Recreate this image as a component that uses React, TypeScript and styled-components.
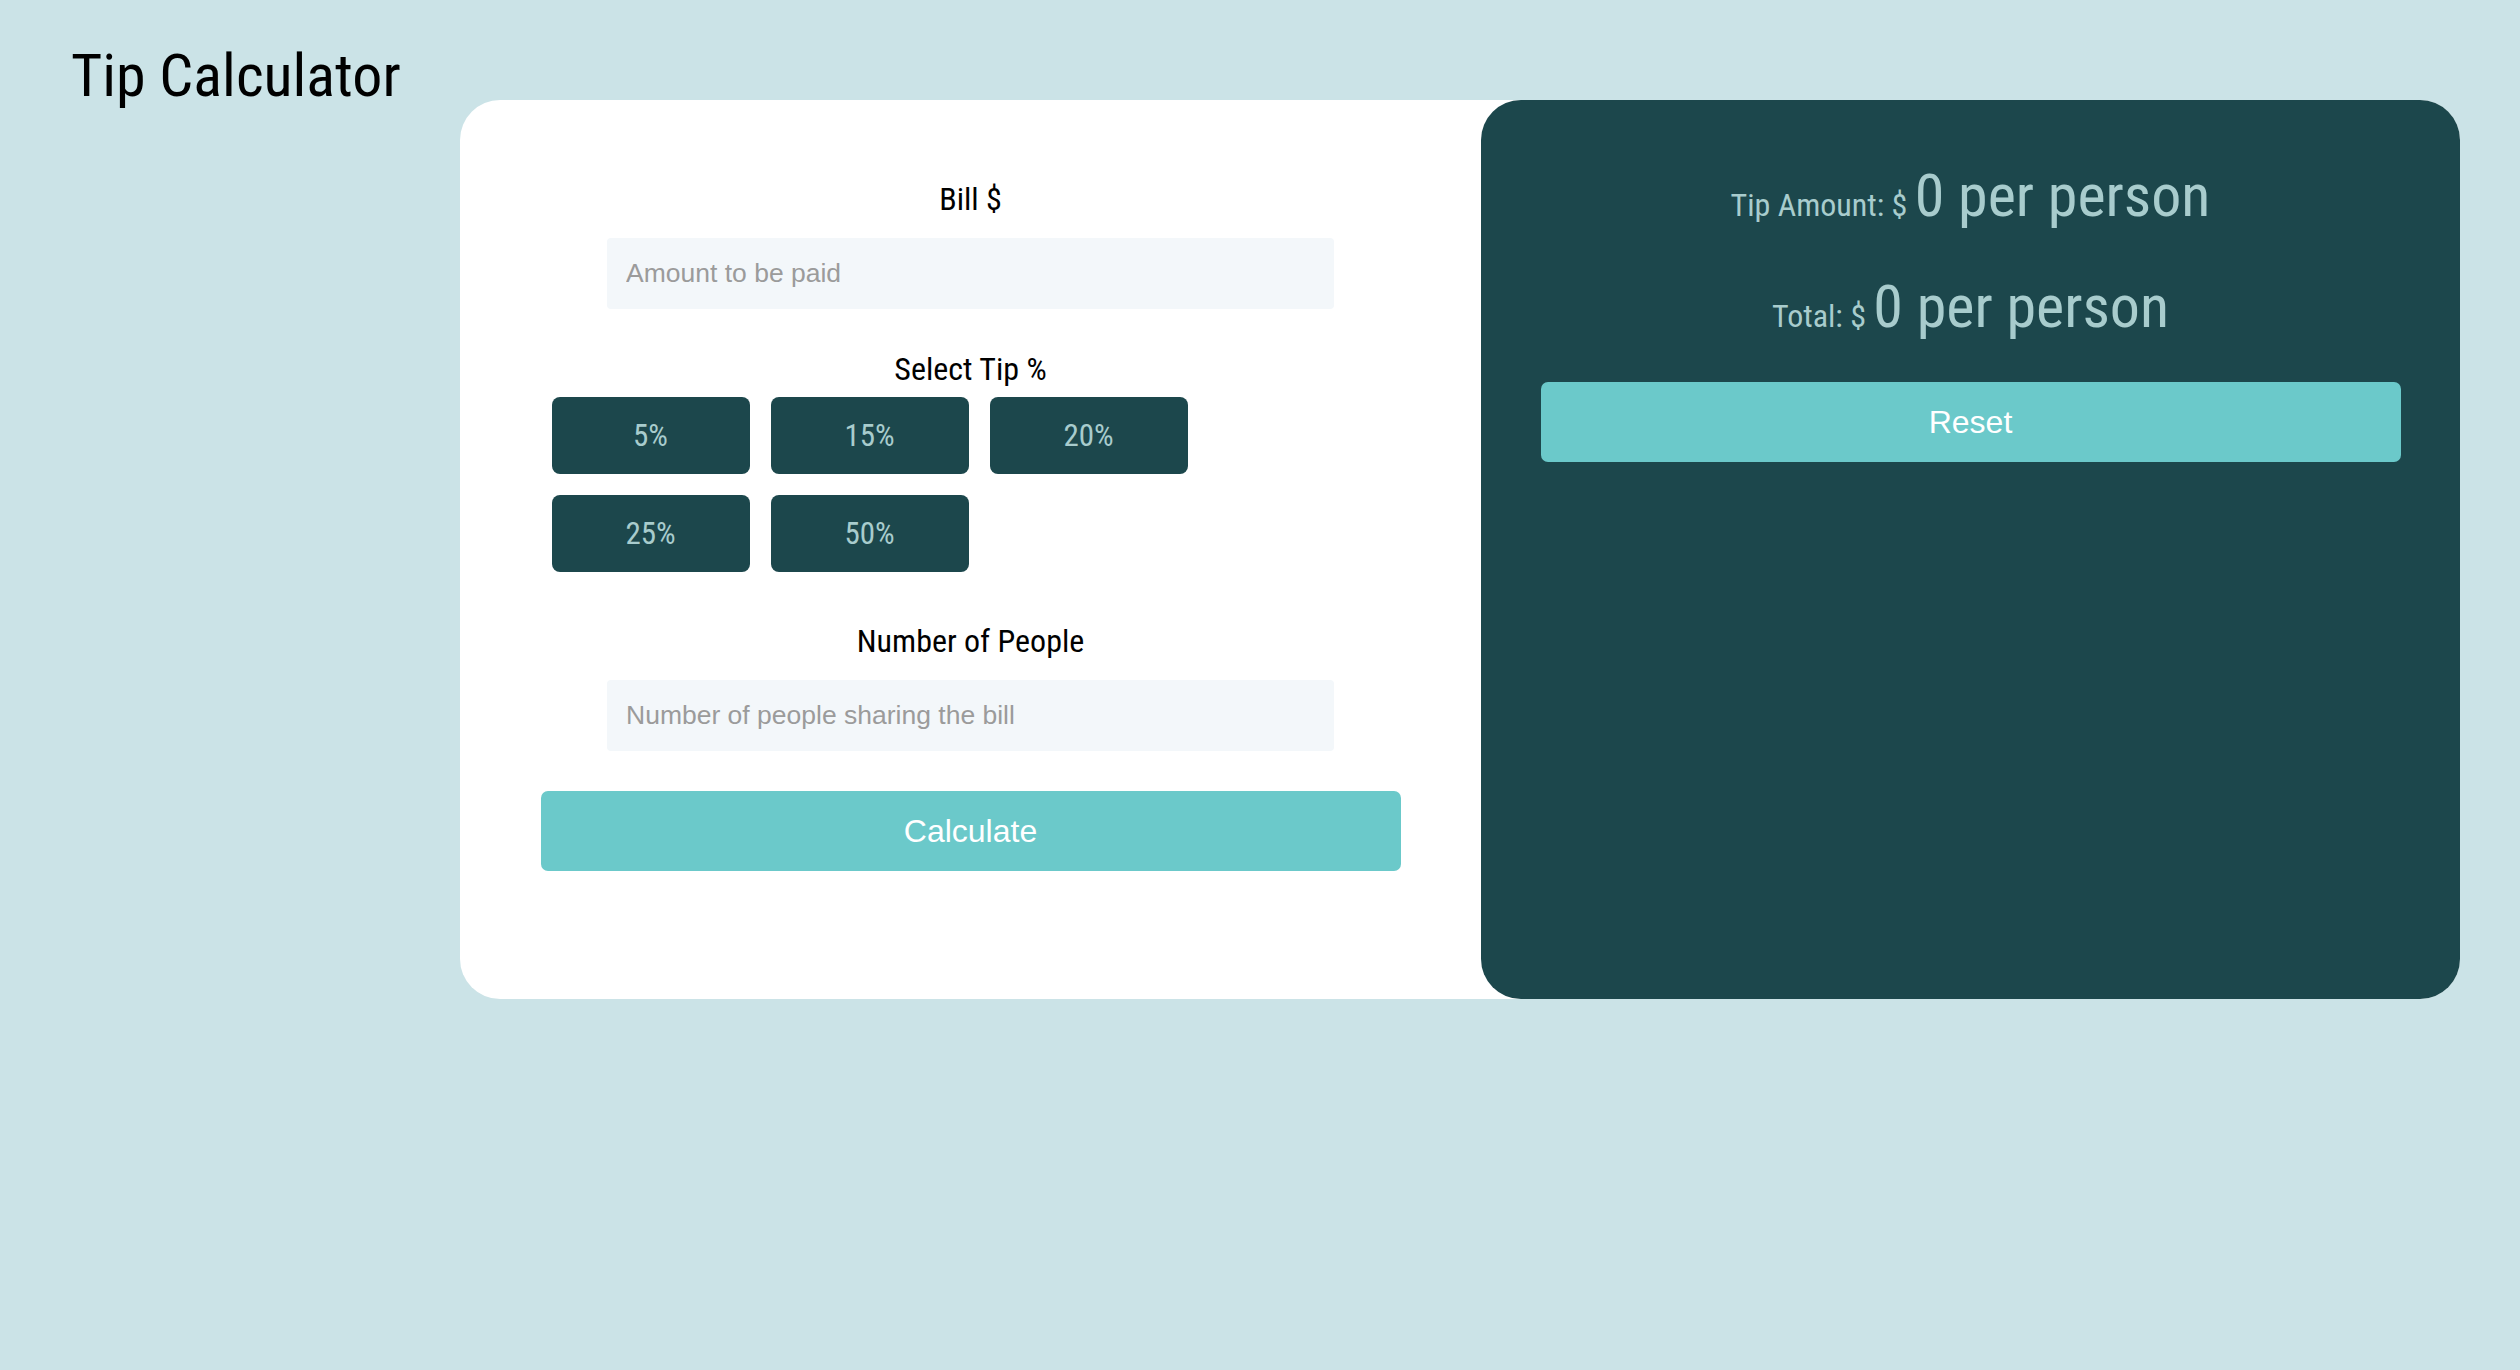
import React from "react";
import styled, { createGlobalStyle } from "styled-components";

const narrow = `"Roboto Condensed", "Liberation Sans Narrow", "Arial Narrow", sans-serif`;
const plain = `"Liberation Sans", Arial, sans-serif`;

const GlobalStyle = createGlobalStyle`
  html, body {
    margin: 0;
    padding: 0;
    background: #cbe3e7;
    min-height: 100%;
  }
  body {
    font-family: ${plain};
  }
  * {
    box-sizing: border-box;
  }
`;

const tips = [5, 15, 20, 25, 50];

export default function App() {
  const [bill, setBill] = React.useState("");
  const [people, setPeople] = React.useState("");
  const [tip, setTip] = React.useState(0);
  const [result, setResult] = React.useState({ tip: 0, total: 0 });

  const calculate = () => {
    const b = parseFloat(bill);
    const p = parseInt(people, 10);
    if (!b || !p) return;
    const t = (b * tip) / 100 / p;
    setResult({ tip: +t.toFixed(2), total: +((b / p) + t).toFixed(2) });
  };

  const reset = () => {
    setBill("");
    setPeople("");
    setTip(0);
    setResult({ tip: 0, total: 0 });
  };

  return (
    <Page>
      <GlobalStyle />
      <Title>Tip Calculator</Title>
      <Card>
        <FormSection>
          <Field>
            <Label>Bill $</Label>
            <Input
              placeholder="Amount to be paid"
              value={bill}
              onChange={(e) => setBill(e.target.value)}
            />
          </Field>
          <TipGroup>
            <Label>Select Tip %</Label>
            <TipGrid>
              {tips.map((t) => (
                <TipButton key={t} $active={tip === t} onClick={() => setTip(t)}>
                  {t}%
                </TipButton>
              ))}
            </TipGrid>
          </TipGroup>
          <Field $spaced>
            <Label>Number of People</Label>
            <Input
              placeholder="Number of people sharing the bill"
              value={people}
              onChange={(e) => setPeople(e.target.value)}
            />
          </Field>
          <WideButton $top={40} onClick={calculate}>
            Calculate
          </WideButton>
        </FormSection>
        <ResultPanel>
          <ResultLine>
            <Small>Tip Amount: $ </Small>
            {result.tip} per person
          </ResultLine>
          <ResultLine>
            <Small>Total: $ </Small>
            {result.total} per person
          </ResultLine>
          <WideButton $top={0} onClick={reset}>
            Reset
          </WideButton>
        </ResultPanel>
      </Card>
    </Page>
  );
}

const Page = styled.div`
  display: flex;
  align-items: flex-start;
  min-height: 100vh;
  padding: 39px 0 0 71px;
`;

const Title = styled.h1`
  margin: 0;
  width: 389px;
  font-family: ${narrow};
  font-weight: 400;
  font-size: 60px;
  line-height: 73px;
  color: #000;
`;

const Card = styled.div`
  display: flex;
  width: 2000px;
  margin-top: 61px;
  background: #fff;
  border-radius: 40px;
`;

const FormSection = styled.div`
  width: 1021px;
  display: flex;
  flex-direction: column;
  align-items: center;
  padding: 80px 0 128px;
`;

const Field = styled.div<{ $spaced?: boolean }>`
  display: flex;
  flex-direction: column;
  align-items: center;
  gap: 20px;
  margin-top: ${(p) => (p.$spaced ? "50px" : "0")};
`;

const Label = styled.label`
  font-family: ${narrow};
  font-size: 32px;
  line-height: 38px;
  color: #000;
`;

const Input = styled.input`
  width: 727px;
  height: 71px;
  border: none;
  outline: none;
  border-radius: 4px;
  background: #f3f7fa;
  padding: 0 19px;
  font-family: ${plain};
  font-size: 26.5px;
  color: #333;

  &::placeholder {
    color: #9b9b9b;
  }
`;

const TipGroup = styled.div`
  display: flex;
  flex-direction: column;
  align-items: center;
  gap: 9px;
  margin-top: 41px;
`;

const TipGrid = styled.div`
  width: 838px;
  display: flex;
  flex-wrap: wrap;
  gap: 21px;
`;

const TipButton = styled.button<{ $active?: boolean }>`
  width: 198px;
  height: 77px;
  border: none;
  border-radius: 8px;
  background: ${(p) => (p.$active ? "#6bc9ca" : "#1c474c")};
  color: ${(p) => (p.$active ? "#1c474c" : "#a8cccd")};
  font-family: ${narrow};
  font-size: 31px;
  cursor: pointer;
`;

const WideButton = styled.button<{ $top: number }>`
  width: 860px;
  height: 80px;
  margin-top: ${(p) => p.$top}px;
  border: none;
  border-radius: 7px;
  background: #6bc9ca;
  color: #fff;
  font-family: ${plain};
  font-size: 32px;
  cursor: pointer;
`;

const ResultPanel = styled.div`
  width: 979px;
  display: flex;
  flex-direction: column;
  align-items: center;
  gap: 40px;
  padding-top: 60px;
  background: #1c474c;
  border-radius: 40px;
`;

const ResultLine = styled.div`
  font-family: ${narrow};
  font-size: 60px;
  line-height: 71px;
  color: #a8cccd;
  white-space: pre;
`;

const Small = styled.span`
  font-size: 32px;
  line-height: 1;
`;
